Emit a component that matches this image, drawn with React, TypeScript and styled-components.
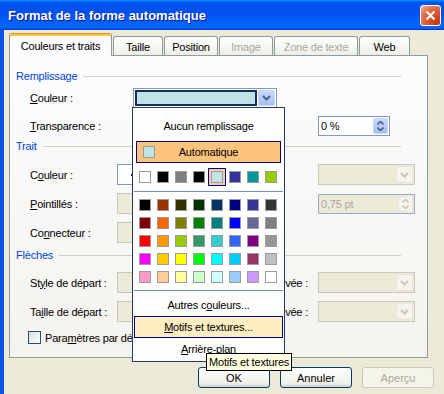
import React from 'react';
import styled, { createGlobalStyle, css } from 'styled-components';

const GlobalStyle = createGlobalStyle`
  html, body {
    margin: 0;
    padding: 0;
    overflow: hidden;
    background: #ece9d8;
  }
`;

const Window = styled.div`
  position: relative;
  width: 444px;
  height: 394px;
  overflow: hidden;
  display: flex;
  flex-direction: column;
  font-family: "Liberation Sans", Arial, sans-serif;
  font-size: 11px;
  letter-spacing: -0.2px;
  color: #000;
  background: #ece9d8;
`;

const TitleBar = styled.div`
  flex: none;
  height: 30px;
  display: flex;
  align-items: center;
  justify-content: space-between;
  padding: 0 3px 0 8px;
  background: linear-gradient(180deg, #0997ff, #0053ee 8%, #0050ee 40%, #0066ff 88%, #0066ff 93%, #005bff 95%, #003dd7 96%, #003dd7);
`;

const Title = styled.span`
  font-size: 13px;
  font-weight: bold;
  letter-spacing: 0;
  color: #fff;
  text-shadow: 1px 1px #0f1089;
`;

const CloseButton = styled.div`
  width: 21px;
  height: 21px;
  box-sizing: border-box;
  border: 1px solid #fff;
  border-radius: 3px;
  display: flex;
  align-items: center;
  justify-content: center;
  background: radial-gradient(circle at 85% 85%, #c23a10 0%, #e0603a 55%, #e8825f 75%, #f6c1ab 100%);
`;

const Body = styled.div`
  flex: 1;
  display: flex;
  flex-direction: column;
  border-left: 4px solid #0c55e4;
  padding: 3px 10px 0 5px;
`;

const TabStrip = styled.div`
  display: flex;
  align-items: flex-end;
  gap: 1px;
  height: 22px;
  position: relative;
  z-index: 1;
`;

const Tab = styled.div<{ $w: number; $active?: boolean; $disabled?: boolean }>`
  width: ${p => p.$w}px;
  height: 19px;
  box-sizing: border-box;
  padding-top: 2px;
  display: flex;
  align-items: center;
  justify-content: center;
  border: 1px solid #919b9c;
  border-bottom: none;
  border-radius: 3px 3px 0 0;
  background: linear-gradient(180deg, #fff, #fafaf9 26%, #f0f0ea 95%, #ecebe6);
  color: ${p => (p.$disabled ? '#aca899' : '#000')};
  white-space: nowrap;
  ${p =>
    p.$active &&
    css`
      height: 23px;
      margin-bottom: -1px;
      background: #fcfcfe;
      border-top: 1px solid #e68b2c;
      box-shadow: inset 0 2px #ffc83c;
    `}
`;

const Panel = styled.div`
  width: 419px;
  height: 303px;
  box-sizing: border-box;
  border: 1px solid #919b9c;
  background: linear-gradient(180deg, #fcfcfe, #f4f3ee);
  padding-left: 6px;
  display: flex;
  flex-direction: column;
`;

const GroupHeading = styled.div<{ $mt: number }>`
  display: flex;
  align-items: center;
  height: 14px;
  margin: ${p => p.$mt}px 26px 0 0;
  color: #0046d5;

  &::after {
    content: '';
    flex: 1;
    height: 1px;
    margin-left: 6px;
    background: #d0d0bf;
  }
`;

const FormRow = styled.div<{ $mt: number; $cols: string; $h?: number }>`
  display: grid;
  grid-template-columns: ${p => p.$cols};
  align-items: center;
  height: ${p => p.$h ?? 21}px;
  margin-top: ${p => p.$mt}px;
  padding-left: 14px;
`;

const Label = styled.span<{ $right?: boolean }>`
  white-space: nowrap;
  overflow: hidden;
  padding: ${p => (p.$right ? '0 10px 0 0' : '0 0 0 11px')};
  text-align: ${p => (p.$right ? 'right' : 'left')};
`;

const FieldLabel = styled.span`
  white-space: nowrap;
`;

const Combo = styled.div<{ $tone: 'active' | 'white' | 'off' }>`
  height: 100%;
  box-sizing: border-box;
  display: flex;
  padding: 1px;
  border: 1px solid ${p => (p.$tone === 'off' ? '#c9c7ba' : '#7f9db9')};
  background: ${p => (p.$tone === 'off' ? '#ecead9' : '#fff')};
`;

const ComboValue = styled.div<{ $color: string }>`
  flex: 1;
  margin-right: 1px;
  border: 2px solid #1b2b5e;
  background: ${p => p.$color};
`;

const LinePreview = styled.div`
  flex: 1;
  align-self: center;
  height: 2px;
  margin-left: 12px;
  background: #000;
`;

const DropButton = styled.div<{ $disabled?: boolean }>`
  width: 17px;
  flex: none;
  margin-left: auto;
  box-sizing: border-box;
  display: flex;
  align-items: center;
  justify-content: center;
  border-radius: 2px;
  ${p =>
    p.$disabled
      ? css`
          border: 1px solid #e8e6dc;
          background: #f4f3ee;
          color: #c9c7ba;
        `
      : css`
          border: 1px solid #c8d7fc;
          background: linear-gradient(180deg, #c6d7fd, #b5c9f8 60%, #a8bdf3);
          color: #4d6185;
        `}
`;

const SpinBox = styled.div<{ $disabled?: boolean }>`
  height: 20px;
  box-sizing: border-box;
  display: flex;
  padding: 1px;
  border: 1px solid ${p => (p.$disabled ? '#9aaac0' : '#7f9db9')};
  background: ${p => (p.$disabled ? '#ecead9' : '#fff')};
  color: ${p => (p.$disabled ? '#aca899' : '#000')};
`;

const SpinText = styled.span`
  flex: 1;
  padding-left: 1px;
  line-height: 16px;
  white-space: pre;
`;

const SpinButton = styled(DropButton)`
  width: 15px;
  flex-direction: column;
  gap: 2px;
`;

const CheckRow = styled.div`
  display: flex;
  align-items: center;
  gap: 4px;
  height: 15px;
  margin-top: 8px;
  padding-left: 12px;
`;

const CheckBox = styled.div`
  width: 13px;
  height: 13px;
  box-sizing: border-box;
  border: 1px solid #1c5180;
  background: linear-gradient(135deg, #dcdcd7, #fff);
`;

const ButtonRow = styled.div`
  display: flex;
  justify-content: flex-end;
  gap: 10px;
  margin-top: 9px;
`;

const DialogButton = styled.button`
  width: 72px;
  height: 21px;
  padding: 0;
  font: inherit;
  color: #000;
  border: 1px solid #003c74;
  border-radius: 3px;
  background: linear-gradient(180deg, #fff, #f0f0ea 80%, #d6d0c5);

  &:disabled {
    color: #aca899;
    border-color: #c9c7ba;
    background: #f5f4ea;
  }
`;

const Menu = styled.div`
  position: absolute;
  left: 132px;
  top: 107px;
  z-index: 5;
  width: 153px;
  box-sizing: border-box;
  padding: 7px 0 1px;
  border: 1px solid #263b6b;
  background: #fdfdfb;
  display: flex;
  flex-direction: column;
`;

const MenuItem = styled.div<{ $hover?: boolean; $mt?: number }>`
  height: 22px;
  box-sizing: border-box;
  margin: ${p => p.$mt ?? 0}px 1px 0;
  display: flex;
  align-items: center;
  justify-content: center;
  white-space: nowrap;
  ${p =>
    p.$hover &&
    css`
      border: 1px solid #000080;
      background: #ffeec2;
    `}
`;

const AutoItem = styled.div`
  height: 22px;
  box-sizing: border-box;
  margin: 4px 3px 0;
  display: grid;
  grid-template-columns: 22px 1fr 22px;
  align-items: center;
  border: 1px solid #000080;
  background: #ffc37d;

  & > span {
    text-align: center;
  }
`;

const Swatch = styled.div<{ $color: string }>`
  width: 12px;
  height: 12px;
  box-sizing: border-box;
  border: 1px solid #9c9c9c;
  background: ${p => p.$color};
`;

const AutoSwatch = styled(Swatch)`
  margin-left: 6px;
`;

const SwatchGrid = styled.div<{ $mt: number }>`
  display: grid;
  grid-template-columns: repeat(8, 18px);
  grid-auto-rows: 18px;
  margin: ${p => p.$mt}px 0 0 3px;
`;

const SwatchCell = styled.div<{ $selected?: boolean }>`
  display: flex;
  align-items: center;
  justify-content: center;
  box-sizing: border-box;
  ${p =>
    p.$selected &&
    css`
      border: 1px solid #000080;
      background: #f6cba8;
    `}
`;

const Separator = styled.div<{ $mt: number }>`
  height: 1px;
  margin: ${p => p.$mt}px 1px 0;
  background: #7090c8;
`;

const Tooltip = styled.div`
  position: absolute;
  left: 206px;
  top: 353px;
  z-index: 6;
  height: 18px;
  box-sizing: border-box;
  padding: 0 2px;
  line-height: 16px;
  border: 1px solid #000;
  background: #ffffe1;
  white-space: nowrap;
`;

const Chevron = () => (
  <svg width="9" height="6" viewBox="0 0 9 6">
    <path d="M1 1 L4.5 4.5 L8 1" stroke="currentColor" strokeWidth="2" fill="none" />
  </svg>
);

const SpinArrow = ({ up }: { up?: boolean }) => (
  <svg width="7" height="4" viewBox="0 0 7 4">
    <path d={up ? 'M0.5 3.5 L3.5 0.5 L6.5 3.5' : 'M0.5 0.5 L3.5 3.5 L6.5 0.5'} stroke="currentColor" strokeWidth="1.6" fill="none" />
  </svg>
);

const recent = ['#ffffff', '#000000', '#808080', '#000000', '#bfe3e7', '#333399', '#009999', '#99cc00'];

const palette = [
  '#000000', '#993300', '#333300', '#003300', '#003366', '#000080', '#333399', '#333333',
  '#800000', '#ff6600', '#808000', '#008000', '#008080', '#0000ff', '#666699', '#808080',
  '#ff0000', '#ff9900', '#99cc00', '#339966', '#33cccc', '#3366ff', '#800080', '#969696',
  '#ff00ff', '#ffcc00', '#ffff00', '#00ff00', '#00ffff', '#00ccff', '#993366', '#c0c0c0',
  '#ff99cc', '#ffcc99', '#ffff99', '#ccffcc', '#ccffff', '#99ccff', '#cc99ff', '#ffffff',
];

const tabs = [
  { label: 'Couleurs et traits', w: 103, active: true },
  { label: 'Taille', w: 50 },
  { label: 'Position', w: 54 },
  { label: 'Image', w: 54, disabled: true },
  { label: 'Zone de texte', w: 84, disabled: true },
  { label: 'Web', w: 51 },
];

const TRAIT_COLS = '87px 100px 101px 97px';
const FILL_COLS = '103px 144px 41px 72px';

function App() {
  return (
    <Window>
      <GlobalStyle />
      <TitleBar>
        <Title>Format de la forme automatique</Title>
        <CloseButton>
          <svg width="11" height="11" viewBox="0 0 11 11">
            <path d="M1.5 1.5 L9.5 9.5 M9.5 1.5 L1.5 9.5" stroke="#fff" strokeWidth="2.2" />
          </svg>
        </CloseButton>
      </TitleBar>

      <Body>
        <TabStrip>
          {tabs.map(t => (
            <Tab key={t.label} $w={t.w} $active={t.active} $disabled={t.disabled}>
              {t.label}
            </Tab>
          ))}
        </TabStrip>

        <Panel>
          <GroupHeading $mt={13}>Remplissage</GroupHeading>
          <FormRow $mt={5} $h={20} $cols={FILL_COLS}>
            <FieldLabel><u>C</u>ouleur :</FieldLabel>
            <Combo $tone="active">
              <ComboValue $color="#bfe3e7" />
              <DropButton><Chevron /></DropButton>
            </Combo>
          </FormRow>
          <FormRow $mt={8} $h={20} $cols={FILL_COLS}>
            <FieldLabel><u>T</u>ransparence :</FieldLabel>
            <span />
            <span />
            <SpinBox>
              <SpinText>0 %</SpinText>
              <SpinButton><SpinArrow up /><SpinArrow /></SpinButton>
            </SpinBox>
          </FormRow>

          <GroupHeading $mt={3}>Trait</GroupHeading>
          <FormRow $mt={11} $cols={TRAIT_COLS}>
            <FieldLabel>C<u>o</u>uleur :</FieldLabel>
            <Combo $tone="white"><LinePreview /></Combo>
            <Label>Style :</Label>
            <Combo $tone="off"><DropButton $disabled><Chevron /></DropButton></Combo>
          </FormRow>
          <FormRow $mt={8} $cols={TRAIT_COLS}>
            <FieldLabel><u>P</u>ointillés :</FieldLabel>
            <Combo $tone="off" />
            <Label>Épaisseur :</Label>
            <SpinBox $disabled>
              <SpinText>0,75 pt</SpinText>
              <SpinButton $disabled><SpinArrow up /><SpinArrow /></SpinButton>
            </SpinBox>
          </FormRow>
          <FormRow $mt={8} $cols={TRAIT_COLS}>
            <FieldLabel>Co<u>n</u>necteur :</FieldLabel>
            <Combo $tone="off" />
          </FormRow>

          <GroupHeading $mt={5}>Flèches</GroupHeading>
          <FormRow $mt={10} $cols={TRAIT_COLS}>
            <FieldLabel>St<u>y</u>le de départ :</FieldLabel>
            <Combo $tone="off" />
            <Label $right>Style d'arrivée :</Label>
            <Combo $tone="off"><DropButton $disabled><Chevron /></DropButton></Combo>
          </FormRow>
          <FormRow $mt={8} $cols={TRAIT_COLS}>
            <FieldLabel>Ta<u>i</u>lle de départ :</FieldLabel>
            <Combo $tone="off" />
            <Label $right>Taille d'arrivée :</Label>
            <Combo $tone="off"><DropButton $disabled><Chevron /></DropButton></Combo>
          </FormRow>
          <CheckRow>
            <CheckBox />
            <FieldLabel>Para<u>m</u>ètres par défaut pour les nouveaux objets</FieldLabel>
          </CheckRow>
        </Panel>

        <ButtonRow>
          <DialogButton>OK</DialogButton>
          <DialogButton>Annuler</DialogButton>
          <DialogButton disabled>Aperçu</DialogButton>
        </ButtonRow>
      </Body>

      <Menu>
        <MenuItem>Aucun remplissage</MenuItem>
        <AutoItem>
          <AutoSwatch $color="#bfe3e7" />
          <span>Automatique</span>
        </AutoItem>
        <SwatchGrid $mt={5}>
          {recent.map((c, i) => (
            <SwatchCell key={i} $selected={i === 4}>
              <Swatch $color={c} />
            </SwatchCell>
          ))}
        </SwatchGrid>
        <Separator $mt={5} />
        <SwatchGrid $mt={4}>
          {palette.map((c, i) => (
            <SwatchCell key={i}>
              <Swatch $color={c} />
            </SwatchCell>
          ))}
        </SwatchGrid>
        <Separator $mt={4} />
        <MenuItem $mt={3}>Autres c<u>o</u>uleurs...</MenuItem>
        <MenuItem $hover><u>M</u>otifs et textures...</MenuItem>
        <MenuItem><u>A</u>rrière-plan</MenuItem>
      </Menu>
      <Tooltip>Motifs et textures</Tooltip>
    </Window>
  );
}

export default App;
